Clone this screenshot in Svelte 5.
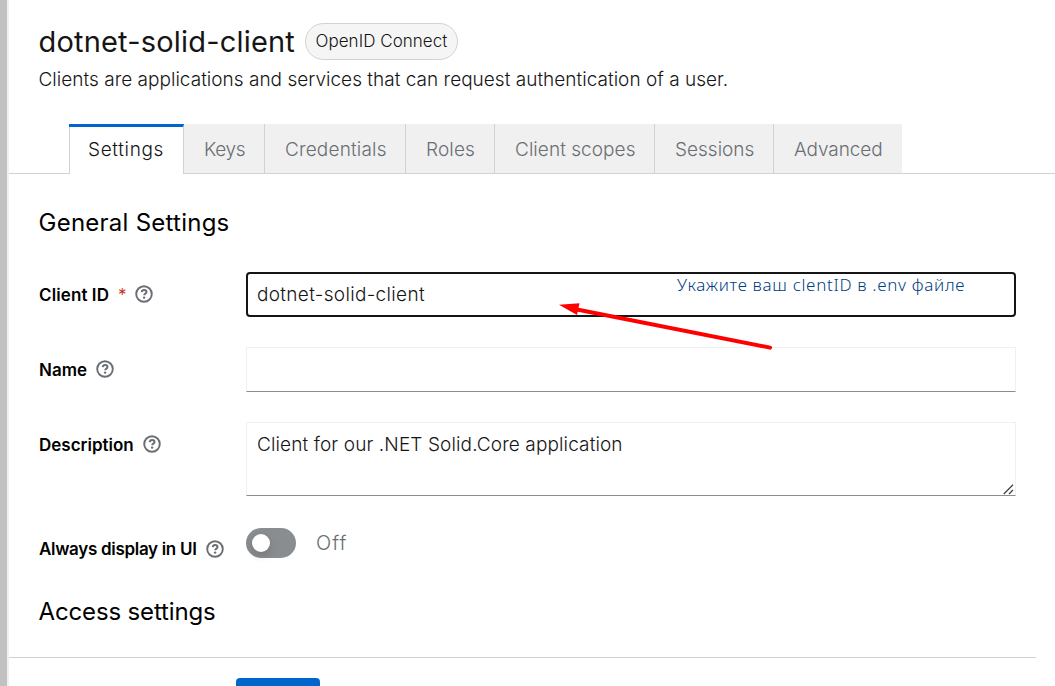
<script>
  const tabs = [
    { name: 'Settings', width: 115, space: 0.66 },
    { name: 'Keys', width: 81, space: -0.3 },
    { name: 'Credentials', width: 141, space: 0.17 },
    { name: 'Roles', width: 89, space: 0.15 },
    { name: 'Client scopes', width: 160, space: 0.05 },
    { name: 'Sessions', width: 119, space: 0 },
    { name: 'Advanced', width: 128, space: -0.08 }
  ];
</script>

{#snippet help()}
  <svg class="help" width="18" height="18" viewBox="0 0 18 18" fill="none" stroke="#6a6e73">
    <circle cx="9" cy="9" r="7.8" stroke-width="1.9" />
    <path d="M6.7 7.2C6.9 5.8 7.8 5.1 9.1 5.1c1.4 0 2.4.8 2.4 2 0 1.5-2.3 1.6-2.3 3.2" stroke-width="2" />
    <circle cx="9.1" cy="12.6" r="1.2" fill="#6a6e73" stroke="none" />
  </svg>
{/snippet}

<div class="page">
  <div class="gutter"></div>
  <main>
    <header>
      <div class="title-row">
        <h1>dotnet-solid-client</h1>
        <span class="chip"><span>OpenID Connect</span></span>
      </div>
      <p>Clients are applications and services that can request authentication of a user.</p>
    </header>

    <nav>
      {#each tabs as tab, i}
        <button class:active={i === 0} style="width: {tab.width}px; letter-spacing: {tab.space}px"><span>{tab.name}</span></button>
      {/each}
    </nav>

    <section>
      <h2 class="general">General Settings</h2>
      <div class="row id-row">
        <div class="label"><b class="l-id">Client ID</b><i>*</i>{@render help()}</div>
        <div class="field focused"><span class="v-id">dotnet-solid-client</span></div>
        <span class="note">Укажите ваш clentID в .env файле</span>
        <svg class="arrow" width="216" height="50" viewBox="0 0 216 50">
          <path d="M17 8.5 210 46.6" stroke="#f00" stroke-width="4" stroke-linecap="round" />
          <path d="M-1 3.8 19.5 2.3 17 14Z" fill="#f00" />
        </svg>
      </div>
      <div class="row name-row">
        <div class="label"><b class="l-name">Name</b>{@render help()}</div>
        <div class="field"></div>
      </div>
      <div class="row desc-row">
        <div class="label"><b class="l-desc">Description</b>{@render help()}</div>
        <div class="field area">
          <span class="v-desc">Client for our .NET Solid.Core application</span>
          <svg class="grip" width="11" height="11" viewBox="0 0 11 11" stroke="#444" stroke-width="1.3">
            <path d="M.8 10 10 .8M6 10l4-4" />
          </svg>
        </div>
      </div>
      <div class="row ui-row">
        <div class="label"><b class="l-ui">Always display in UI</b>{@render help()}</div>
        <div class="switch"><span class="track"></span><span class="off">Off</span></div>
      </div>
      <h2 class="access">Access settings</h2>
    </section>

    <footer><div class="save"></div></footer>
  </main>
</div>

<style>
  :global(body) { margin: 0; background: #fff; overflow: hidden; }
  .page {
    display: flex;
    width: 1055px;
    height: 686px;
    overflow: hidden;
    font-family: Inter, "Noto Sans", sans-serif;
    font-weight: 300;
    font-size: 19px;
    color: #151515;
    white-space: nowrap;
  }
  .gutter { box-sizing: border-box; width: 9px; background: #c1c1c1; border-right: 2px solid #f0f0f0; flex: none; }
  main { width: 1046px; flex: none; display: flex; flex-direction: column; }
  header { height: 124px; box-sizing: border-box; padding: 23px 0 0 29.5px; }
  .title-row { display: flex; height: 37px; }
  h1 { margin: 0; width: 266.5px; font-size: 29px; font-weight: 400; line-height: 37px; letter-spacing: 0.19px; }
  .chip {
    box-sizing: border-box;
    width: 153px;
    height: 37px;
    border: 1px solid #d2d2d2;
    border-radius: 19px;
    background: #f5f5f5;
    padding-left: 9.5px;
    font-size: 17px;
    line-height: 35px;
    letter-spacing: 0.04px;
  }
  p { margin: 5px 0 0; line-height: 30px; letter-spacing: 0.02px; }
  nav { display: flex; height: 50px; box-sizing: border-box; padding-left: 60px; box-shadow: inset 0 -1px #d2d2d2; flex: none; }
  nav button {
    box-sizing: border-box;
    border: 0;
    border-right: 1px solid #d2d2d2;
    border-bottom: 1px solid #d2d2d2;
    background: #f0f0f0;
    padding: 2px 0 0 20px;
    text-align: left;
    font: inherit;
    line-height: 47px;
    color: #6a6e73;
    flex: none;
  }
  nav button:last-child { border-right: 0; }
  nav button.active {
    background: #fff;
    color: #151515;
    border-top: 3px solid #06c;
    border-bottom: 0;
    padding: 0 0 2px 19px;
    line-height: 44px;
    box-shadow: inset 1px 0 #d2d2d2;
  }
  section { padding: 0 39px 0 30px; height: 483px; box-sizing: border-box; flex: none; }
  h2 { margin: 0 0 0 -0.5px; font-size: 24px; font-weight: 400; color: #000; line-height: 34px; }
  .general { padding-top: 32px; height: 66px; box-sizing: border-box; letter-spacing: 0.25px; }
  .access { letter-spacing: -0.14px; }
  .row { display: grid; grid-template-columns: 207px 770px; position: relative; }
  .id-row { margin-top: 32px; height: 75px; z-index: 1; }
  .name-row { height: 75px; }
  .desc-row { height: 106px; }
  .ui-row { height: 67px; }
  .label { display: flex; align-items: center; height: 45px; color: #000; }
  .label b { font-weight: 600; font-size: 17px; }
  .label .l-id { letter-spacing: 0.1px; }
  .label .l-ui { letter-spacing: -0.31px; }
  .label i { font-style: normal; font-size: 17px; color: #c9190b; margin-left: 9px; width: 8px; }
  .help { margin: 0 0 1px 9px; }
  .field { box-sizing: border-box; height: 45px; border: 1px solid #f0f0f0; border-bottom-color: #8a8d90; padding-left: 10px; line-height: 43px; }
  .focused { border: 2px solid #151515; border-radius: 4px; padding-left: 9px; line-height: 41px; }
  .v-id { letter-spacing: 0.32px; }
  .v-desc { letter-spacing: 0.12px; }
  .area { height: 74px; position: relative; }
  .grip { position: absolute; right: 1px; bottom: 0; fill: none; }
  .note { position: absolute; left: 638px; top: 0; line-height: 26px; font-family: "Noto Sans", sans-serif; font-size: 17px; letter-spacing: 0.68px; color: #004080; }
  .arrow { position: absolute; left: 521px; top: 28.5px; fill: none; overflow: visible; }
  .ui-row .label { height: 42px; }
  .switch { display: flex; align-items: flex-start; }
  .track { width: 50px; height: 30px; border-radius: 15px; background: #8a8d90; display: flex; align-items: center; }
  .track::before { content: ""; width: 18px; height: 18px; margin-left: 6px; border-radius: 50%; background: #fff; box-shadow: 0 4px 8px rgba(0, 0, 0, 0.16); }
  .off { margin-left: 20px; line-height: 30px; color: #6a6e73; font-size: 20px; letter-spacing: 1px; }
  footer { width: 1027px; height: 29px; box-sizing: border-box; border-top: 1px solid #d2d2d2; padding: 20px 0 0 227px; flex: none; }
  .save { width: 84px; height: 12px; border-radius: 4px 4px 0 0; background: #06c; }
</style>
